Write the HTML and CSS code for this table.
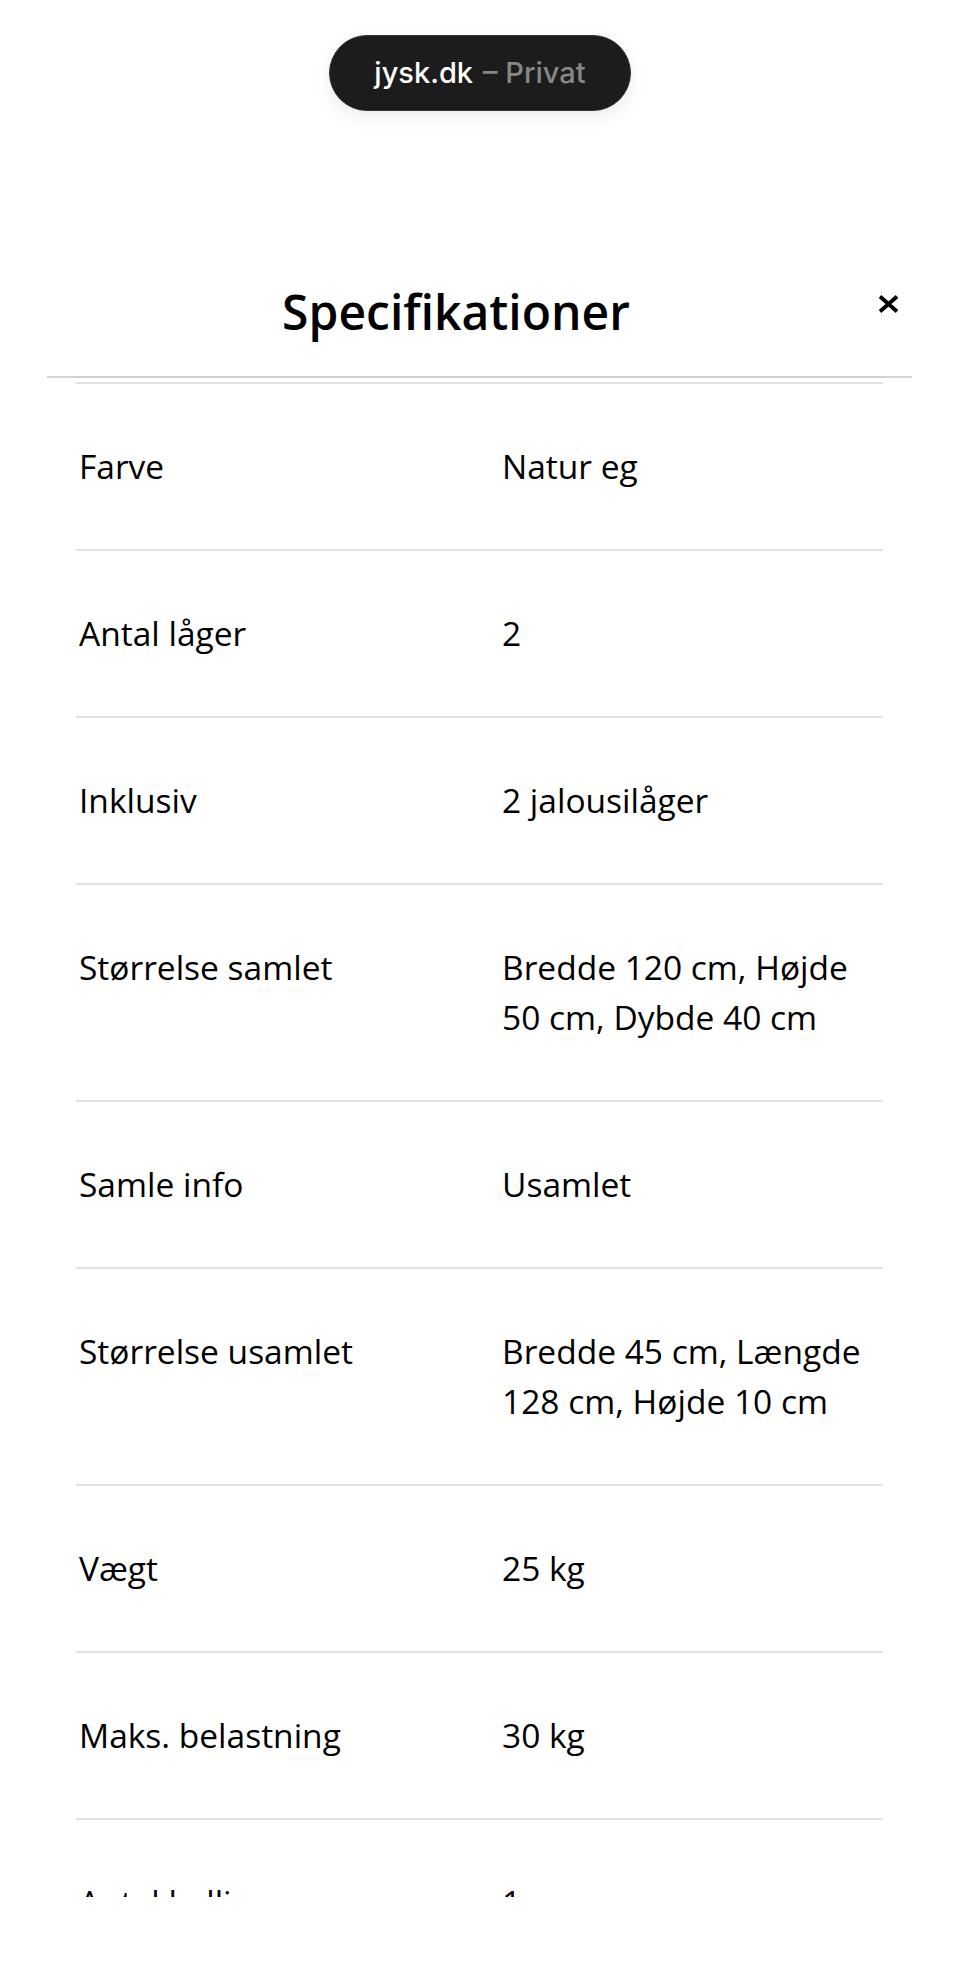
FILE: index.html
```html
<!DOCTYPE html>
<html lang="da">
<head>
    <meta charset="UTF-8">
    <meta name="viewport" content="width=device-width, initial-scale=1.0">
    <title>Specifikationer</title>
    <link rel="stylesheet" href="styles.css">
</head>
<body>
    <div class="topbar">
        <div class="url-pill">
            <span class="domain">jysk.dk</span>
            <span class="mode">&ndash; Privat</span>
        </div>
    </div>

    <div class="sheet">
        <div class="sheet-header">
            <h1>Specifikationer</h1>
            <button class="close-btn" type="button" aria-label="Luk">
                <svg width="21" height="18" viewBox="0 0 21 18">
                    <path d="M2 1.5 L19 16.5 M19 1.5 L2 16.5" stroke="#000" stroke-width="3.8" stroke-linecap="butt" fill="none"/>
                </svg>
            </button>
        </div>

        <div class="spec-scroll">
            <div class="spec-list">
                <div class="spec-row">
                    <div class="spec-label">Farve</div>
                    <div class="spec-value">Natur eg</div>
                </div>
                <div class="spec-row">
                    <div class="spec-label">Antal låger</div>
                    <div class="spec-value">2</div>
                </div>
                <div class="spec-row">
                    <div class="spec-label">Inklusiv</div>
                    <div class="spec-value">2 jalousilåger</div>
                </div>
                <div class="spec-row">
                    <div class="spec-label">Størrelse samlet</div>
                    <div class="spec-value">Bredde 120 cm, Højde 50 cm, Dybde 40 cm</div>
                </div>
                <div class="spec-row">
                    <div class="spec-label">Samle info</div>
                    <div class="spec-value">Usamlet</div>
                </div>
                <div class="spec-row">
                    <div class="spec-label">Størrelse usamlet</div>
                    <div class="spec-value">Bredde 45 cm, Længde 128 cm, Højde 10 cm</div>
                </div>
                <div class="spec-row">
                    <div class="spec-label">Vægt</div>
                    <div class="spec-value">25 kg</div>
                </div>
                <div class="spec-row">
                    <div class="spec-label">Maks. belastning</div>
                    <div class="spec-value">30 kg</div>
                </div>
                <div class="spec-row">
                    <div class="spec-label">Antal kolli</div>
                    <div class="spec-value">1</div>
                </div>
            </div>
        </div>
    </div>
</body>
</html>
```

FILE: styles.css
```css
body {
    margin: 0;
    background-color: #fff;
    font-family: "Open Sans", "Noto Sans", sans-serif;
    color: #000;
}
.topbar {
    display: flex;
    justify-content: center;
    padding-top: 35px;
}
.url-pill {
    box-sizing: border-box;
    width: 302px;
    height: 76px;
    border-radius: 38px;
    background-color: #1c1c1c;
    border: 1.5px solid #333;
    box-shadow: 0 6px 18px rgba(0, 0, 0, 0.08);
    display: flex;
    justify-content: center;
    align-items: center;
    gap: 10px;
    font-family: Inter, "Liberation Sans", sans-serif;
    font-size: 29px;
    font-weight: 500;
    padding-bottom: 2px;
}
.domain {
    color: #fff;
}
.mode {
    color: #878787;
}
.sheet {
    margin: 151px 48px 0 47px;
}
.sheet-header {
    display: flex;
    align-items: flex-start;
    padding: 20px 0 34px;
    border-bottom: 2px solid #d2d2d2;
}
.sheet-header h1 {
    flex: 1;
    margin: 0;
    text-align: center;
    font-size: 48px;
    font-weight: 600;
    line-height: 60px;
}
.close-btn {
    width: 47px;
    height: 44px;
    padding: 0;
    border: none;
    background: none;
    display: flex;
    justify-content: center;
    align-items: center;
    cursor: pointer;
}
.spec-scroll {
    height: 1519px;
    overflow: hidden;
    padding: 0 29px;
}
.spec-list {
    margin-top: 4px;
    border-top: 2px solid #e2e2e2;
}
.spec-row {
    display: grid;
    grid-template-columns: 423px 1fr;
    padding: 57px 0 58px 3px;
    border-bottom: 2px solid #e2e2e2;
    font-size: 33.5px;
    line-height: 50px;
}
```
